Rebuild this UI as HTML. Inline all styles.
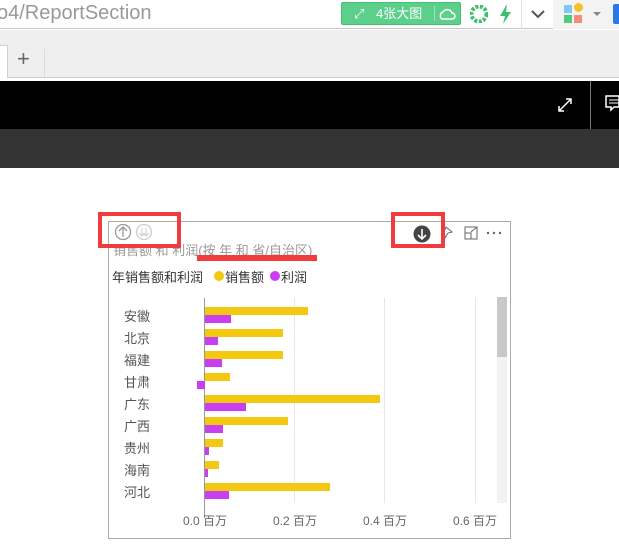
<!DOCTYPE html>
<html><head><meta charset="utf-8"><style>
*{margin:0;padding:0;box-sizing:border-box}
body{width:619px;height:559px;overflow:hidden;background:#fff;position:relative;font-family:"Liberation Sans","Noto Sans CJK SC",sans-serif}
.a{position:absolute}
.y{position:absolute;background:#f2c811;height:8px}
.p{position:absolute;background:#c83ef0;height:8px}
.lbl{position:absolute;left:124px;font-size:13px;color:#555;width:40px}
.g{position:absolute;top:298px;height:205px;width:1px;background:#e6e6e6}
.ax{position:absolute;top:512px;font-size:12px;color:#666}
</style></head><body>
<div class="a" style="left:0;top:0;width:619px;height:29px;background:#fff;border-bottom:1px solid #c8c8c8"></div>
<div class="a" style="left:-3px;top:2px;font-size:20px;color:#999">o4/ReportSection</div>
<div class="a" style="left:341px;top:2px;width:120px;height:23px;background:#5ccf8a;border:1px solid #45bf75;border-radius:2px;color:#fff;font-size:13px;line-height:21px">
<span style="position:absolute;left:12px;top:0">⤢</span><span style="position:absolute;left:34px">4张大图</span>
<span style="position:absolute;left:92px;top:3px;width:1px;height:15px;background:#9ee3b8"></span>
<svg style="position:absolute;left:97px;top:3px" width="17" height="15"><path d="M3 13h10a3 3 0 0 0 0-6 5 5 0 0 0-9-1 4 4 0 0 0-1 7z" fill="none" stroke="#fff" stroke-width="1.5"/></svg></div>
<svg class="a" style="left:470px;top:5px" width="18" height="18"><circle cx="9" cy="9" r="7.5" fill="none" stroke="#3cbf6e" stroke-width="4" stroke-dasharray="3 1.5"/></svg>
<svg class="a" style="left:497px;top:3px" width="16" height="22"><path d="M10 1L3 13h5l-2 8 8-12H9z" fill="#3cbf6e"/></svg>
<div class="a" style="left:521px;top:0;width:1px;height:29px;background:#e3e3e3"></div>
<svg class="a" style="left:530px;top:8px" width="16" height="12"><path d="M2 3l6 6 6-6" fill="none" stroke="#555" stroke-width="2"/></svg>
<div class="a" style="left:553px;top:0;width:66px;height:29px;background:#f3f3f3"></div>
<div class="a" style="left:564px;top:5px;width:8px;height:8px;background:#7cc7f3"></div>
<div class="a" style="left:574px;top:3px;width:9px;height:9px;background:#f5c02b;border-radius:50%"></div>
<div class="a" style="left:564px;top:15px;width:8px;height:8px;background:#4fcb7b"></div>
<div class="a" style="left:574px;top:15px;width:8px;height:8px;background:#f58a7a"></div>
<div class="a" style="left:593px;top:12px;border:4px solid transparent;border-top:4px solid #888"></div>
<div class="a" style="left:613px;top:4px;width:8px;height:20px;background:#2a7ae4;border-radius:2px"></div>
<div class="a" style="left:0;top:30px;width:619px;height:48px;background:#efefef;border-bottom:1px solid #cfcfcf"></div>
<div class="a" style="left:0;top:45px;width:8px;height:33px;background:#fff;border-right:1px solid #cfcfcf;border-top:1px solid #cfcfcf"></div>
<div class="a" style="left:17px;top:47px;font-size:22px;color:#666;line-height:24px">+</div>
<div class="a" style="left:44px;top:49px;width:1px;height:28px;background:#dadada"></div>
<div class="a" style="left:0;top:81px;width:619px;height:48px;background:#000"></div>
<div class="a" style="left:590px;top:81px;width:1px;height:48px;background:#777"></div>
<svg class="a" style="left:557px;top:97px" width="16" height="16"><path d="M2 14L14 2M9 2h5v5M2 9v5h5" fill="none" stroke="#fff" stroke-width="1.5"/></svg>
<svg class="a" style="left:605px;top:95px" width="14" height="18"><path d="M1 1h13v11H9l-3 3v-3H1z" fill="none" stroke="#fff" stroke-width="1.5"/><path d="M4 5h10M4 8h10" stroke="#fff"/></svg>
<div class="a" style="left:0;top:129px;width:619px;height:39px;background:#333"></div>
<div class="a" style="left:108px;top:221px;width:403px;height:318px;border:1px solid #aaa"></div>
<svg class="a" style="left:114px;top:223px" width="40" height="20"><circle cx="9" cy="9" r="7.5" fill="none" stroke="#999" stroke-width="1.3"/><path d="M9 14V4M5 8l4-4 4 4" fill="none" stroke="#999" stroke-width="1.3"/><circle cx="30" cy="9" r="7.5" fill="none" stroke="#ccc" stroke-width="1.3"/><path d="M28 5v8M32 5v8M25 10l3 3 3-3M29 10l3 3 3-3" fill="none" stroke="#ccc" stroke-width="1"/></svg>
<svg class="a" style="left:412px;top:224px" width="20" height="20"><circle cx="10" cy="10" r="8.5" fill="#444"/><path d="M10 5v10M6 11l4 4 4-4" fill="none" stroke="#fff" stroke-width="1.6"/></svg>
<svg class="a" style="left:438px;top:224px" width="70" height="16"><path d="M8 3l6 5-4 1-3 5-1-6z" fill="none" stroke="#666"/><path d="M27 3h12v12H27zM27 9h6v6M33 3l6 0" fill="none" stroke="#666"/><path d="M33 8l6-5" stroke="#666"/><circle cx="50" cy="9" r="1.2" fill="#666"/><circle cx="56" cy="9" r="1.2" fill="#666"/><circle cx="62" cy="9" r="1.2" fill="#666"/></svg>
<div class="a" style="left:113px;top:240px;font-size:13px;color:#999">销售额 和 利润(按 年 和 省/自治区)</div>
<div class="a" style="left:98px;top:212px;width:83px;height:36px;border:4px solid #f03c3c"></div>
<div class="a" style="left:391px;top:212px;width:54px;height:36px;border:4px solid #f03c3c"></div>
<div class="a" style="left:197px;top:255px;width:120px;height:6px;background:#f03c3c"></div>
<div class="a" style="left:112px;top:267px;font-size:13px;color:#333">年销售额和利润</div>
<div class="a" style="left:214px;top:271px;width:10px;height:10px;border-radius:50%;background:#f2c811"></div>
<div class="a" style="left:225px;top:267px;font-size:13px;color:#333">销售额</div>
<div class="a" style="left:270px;top:271px;width:10px;height:10px;border-radius:50%;background:#c83ef0"></div>
<div class="a" style="left:281px;top:267px;font-size:13px;color:#333">利润</div>
<div class="g" style="left:294px"></div><div class="g" style="left:384px"></div><div class="g" style="left:475px"></div>
<div class="a" style="left:204px;top:298px;width:1px;height:220px;background:#999"></div>
<div class="a" style="left:497px;top:297px;width:10px;height:206px;background:#f2f2f2"></div>
<div class="a" style="left:497px;top:297px;width:10px;height:60px;background:#c8c8c8"></div>
<div class="lbl" style="top:306px">安徽</div><div class="y" style="left:205px;top:307px;width:103px"></div><div class="p" style="left:205px;top:315px;width:26px"></div>
<div class="lbl" style="top:328px">北京</div><div class="y" style="left:205px;top:329px;width:78px"></div><div class="p" style="left:205px;top:337px;width:13px"></div>
<div class="lbl" style="top:350px">福建</div><div class="y" style="left:205px;top:351px;width:78px"></div><div class="p" style="left:205px;top:359px;width:17px"></div>
<div class="lbl" style="top:372px">甘肃</div><div class="y" style="left:205px;top:373px;width:25px"></div><div class="p" style="left:197px;top:381px;width:8px"></div>
<div class="lbl" style="top:394px">广东</div><div class="y" style="left:205px;top:395px;width:175px"></div><div class="p" style="left:205px;top:403px;width:41px"></div>
<div class="lbl" style="top:416px">广西</div><div class="y" style="left:205px;top:417px;width:83px"></div><div class="p" style="left:205px;top:425px;width:18px"></div>
<div class="lbl" style="top:438px">贵州</div><div class="y" style="left:205px;top:439px;width:18px"></div><div class="p" style="left:205px;top:447px;width:4px"></div>
<div class="lbl" style="top:460px">海南</div><div class="y" style="left:205px;top:461px;width:14px"></div><div class="p" style="left:205px;top:469px;width:3px"></div>
<div class="lbl" style="top:482px">河北</div><div class="y" style="left:205px;top:483px;width:125px"></div><div class="p" style="left:205px;top:491px;width:24px"></div>
<div class="ax" style="left:183px">0.0 百万</div>
<div class="ax" style="left:273px">0.2 百万</div>
<div class="ax" style="left:363px">0.4 百万</div>
<div class="ax" style="left:453px">0.6 百万</div>
</body></html>
